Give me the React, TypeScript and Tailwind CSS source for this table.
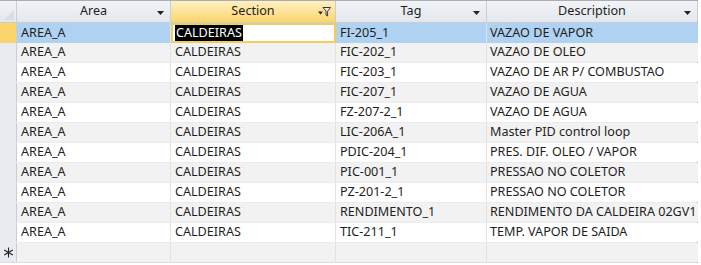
import React from 'react';

interface Row {
  area: string;
  section: string;
  tag: string;
  description: string;
}

const rows: Row[] = [
  { area: 'AREA_A', section: 'CALDEIRAS', tag: 'FI-205_1', description: 'VAZAO DE VAPOR' },
  { area: 'AREA_A', section: 'CALDEIRAS', tag: 'FIC-202_1', description: 'VAZAO DE OLEO' },
  { area: 'AREA_A', section: 'CALDEIRAS', tag: 'FIC-203_1', description: 'VAZAO DE AR P/ COMBUSTAO' },
  { area: 'AREA_A', section: 'CALDEIRAS', tag: 'FIC-207_1', description: 'VAZAO DE AGUA' },
  { area: 'AREA_A', section: 'CALDEIRAS', tag: 'FZ-207-2_1', description: 'VAZAO DE AGUA' },
  { area: 'AREA_A', section: 'CALDEIRAS', tag: 'LIC-206A_1', description: 'Master PID control loop' },
  { area: 'AREA_A', section: 'CALDEIRAS', tag: 'PDIC-204_1', description: 'PRES. DIF. OLEO / VAPOR' },
  { area: 'AREA_A', section: 'CALDEIRAS', tag: 'PIC-001_1', description: 'PRESSAO NO COLETOR' },
  { area: 'AREA_A', section: 'CALDEIRAS', tag: 'PZ-201-2_1', description: 'PRESSAO NO COLETOR' },
  { area: 'AREA_A', section: 'CALDEIRAS', tag: 'RENDIMENTO_1', description: 'RENDIMENTO DA CALDEIRA 02GV1' },
  { area: 'AREA_A', section: 'CALDEIRAS', tag: 'TIC-211_1', description: 'TEMP. VAPOR DE SAIDA' },
];

const cols = 'grid grid-cols-[17px_154px_165px_151px_211px]';

const DropArrow = () => (
  <svg width="7" height="4" viewBox="0 0 7 4" className="absolute right-[6px] top-[10px]">
    <path d="M0 0H7L3.5 4Z" fill="#222" />
  </svg>
);

const FilterIcon = () => (
  <svg width="13" height="10" viewBox="0 0 13 10" className="absolute right-[4px] top-[6px]">
    <path d="M0 4.5H5L2.5 7.5Z" fill="#222" />
    <path d="M5 0.5H12.5L9.6 4.2V9L8 8V4.2Z" fill="#f4f4f4" stroke="#333" strokeWidth="1" />
  </svg>
);

const Asterisk = () => (
  <svg width="11" height="11" viewBox="0 0 11 11">
    <path d="M5.5 0.5V10.5M1.2 3L9.8 8M1.2 8L9.8 3" stroke="#222" strokeWidth="1.1" />
  </svg>
);

const HeaderCell = ({ label, active, filter }: { label: string; active?: boolean; filter?: boolean }) => (
  <div
    className={`relative flex h-[21px] items-center justify-center border-r border-[#c9ced6] ${
      active ? 'bg-gradient-to-b from-[#fff0bf] to-[#fbd66e]' : 'bg-gradient-to-b from-[#f2f4f7] to-[#e3e7ec]'
    }`}
  >
    <span className="text-[#1e1e1e]">{label}</span>
    {filter ? <FilterIcon /> : <DropArrow />}
  </div>
);

const App = () => {
  return (
    <div className="h-[265px] w-[701px] overflow-hidden bg-white font-['Noto_Sans',sans-serif] text-[12.6px] text-[#1e1e1e]">
      <div className="w-[698px] border-t border-r border-[#a9aeb6]">
        <div className={`${cols} border-b border-[#c9ced6]`}>
          <div className="relative h-[21px] border-r border-[#c9ced6] bg-gradient-to-b from-[#f2f4f7] to-[#e3e7ec]">
            <svg width="10" height="10" className="absolute bottom-[2px] right-[2px]">
              <path d="M10 0V10H0Z" fill="#d8dce3" />
            </svg>
          </div>
          <HeaderCell label="Area" />
          <HeaderCell label="Section" active filter />
          <HeaderCell label="Tag" />
          <HeaderCell label="Description" />
        </div>

        {rows.map((r, i) => {
          const selected = i === 0;
          const bg = selected ? 'bg-[#b0d2f2]' : i % 2 === 1 ? 'bg-[#f2f2f2]' : 'bg-white';
          return (
            <div key={i} className={`${cols} h-[20px] border-b border-[#ececec]`}>
              <div
                className={`border-r border-[#c9ced6] ${selected ? 'bg-[#fbd56b]' : 'bg-[#e8ebf0]'}`}
              />
              <div className={`flex items-center border-r border-[#e2e2e2] pl-[4px] ${bg}`}>{r.area}</div>
              {selected ? (
                <div className="flex items-center border-2 border-[#f3cd5c] bg-white pl-[2px]">
                  <span className="bg-black px-[1px] leading-[16px] text-white">{r.section}</span>
                </div>
              ) : (
                <div className={`flex items-center border-r border-[#e2e2e2] pl-[4px] ${bg}`}>{r.section}</div>
              )}
              <div className={`flex items-center border-r border-[#e2e2e2] pl-[4px] ${bg}`}>{r.tag}</div>
              <div className={`flex items-center overflow-hidden whitespace-nowrap pl-[3px] ${bg}`}>{r.description}</div>
            </div>
          );
        })}

        <div className={`${cols} h-[20px] border-b border-[#dcdcdc]`}>
          <div className="flex items-center justify-center border-r border-[#c9ced6] bg-[#e8ebf0]">
            <Asterisk />
          </div>
          <div className="border-r border-[#e2e2e2] bg-[#f2f2f2]" />
          <div className="border-r border-[#e2e2e2] bg-[#f2f2f2]" />
          <div className="border-r border-[#e2e2e2] bg-[#f2f2f2]" />
          <div className="bg-[#f2f2f2]" />
        </div>
      </div>
    </div>
  );
};

export default App;
